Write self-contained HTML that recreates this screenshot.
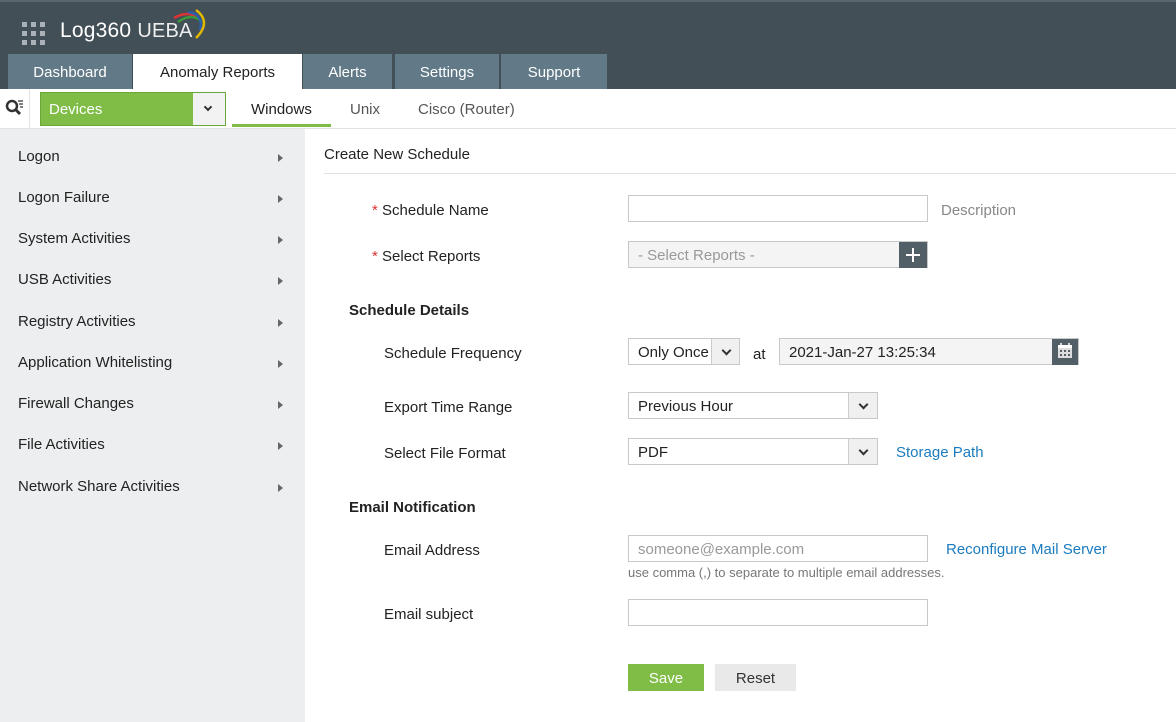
<!DOCTYPE html>
<html><head><style>
*{box-sizing:border-box;margin:0;padding:0}
body{width:1176px;height:722px;position:relative;overflow:hidden;font-family:"Liberation Sans","DejaVu Sans",sans-serif;font-size:14px;color:#222;background:#fff}
.a{position:absolute}
.hdr{left:0;top:0;width:1176px;height:89px;background:#434f57;border-top:2px solid #5b666d}
.tab{top:54px;height:35px;background:#627a88;color:#fff;font-size:15px;text-align:center;line-height:37px}
.side{left:0;top:129px;width:305px;height:593px;background:#eceeef}
.si{left:18px;font-size:15px;color:#222;margin-top:1px}
.arr{left:278px;width:0;height:0;border-left:5px solid #666;border-top:4px solid transparent;border-bottom:4px solid transparent}
.lbl{font-size:15px;color:#222;margin-top:1px}
.box{border:1px solid #c8c8c8;background:#fff;height:27px}
.dd{width:30px;height:100%;position:absolute;right:0;top:0;background:#f0f0f0;border-left:1px solid #ccc}
.dd:after{content:"";position:absolute;left:11px;top:8px;width:5px;height:5px;border-right:2px solid #333;border-bottom:2px solid #333;transform:rotate(45deg)}
.txt{font-size:15px;padding-left:9px;line-height:27px}
.star{color:#d33}
.link{color:#1a7bbf;font-size:15px;margin-top:1px}
</style></head><body>
<div class="a hdr"></div>
<svg class="a" style="left:22px;top:22px" width="24" height="24"><g fill="#aab2b8">
<rect x="0" y="0" width="5" height="5"/><rect x="9" y="0" width="5" height="5"/><rect x="18" y="0" width="5" height="5"/>
<rect x="0" y="9" width="5" height="5"/><rect x="9" y="9" width="5" height="5"/><rect x="18" y="9" width="5" height="5"/>
<rect x="0" y="18" width="5" height="5"/><rect x="9" y="18" width="5" height="5"/><rect x="18" y="18" width="5" height="5"/></g></svg>
<div class="a" style="left:60px;top:19px;font-size:21px;color:#fff;letter-spacing:0.2px">Log360 <span style="font-size:20px;color:#eee">UEBA</span></div>
<svg class="a" style="left:160px;top:8px" width="50" height="35"><path d="M14 10 Q28 2 38 10" stroke="#d33" stroke-width="2.5" fill="none"/><path d="M18 14 Q32 4 42 14" stroke="#3a9a3a" stroke-width="2.5" fill="none"/><path d="M28 4 Q44 6 40 22" stroke="#2a5fb0" stroke-width="2.5" fill="none"/><path d="M36 2 Q52 14 36 30" stroke="#e0b800" stroke-width="2.5" fill="none"/></svg>
<div class="a tab" style="left:8px;width:124px">Dashboard</div>
<div class="a tab" style="left:133px;width:169px;background:#fff;color:#222">Anomaly Reports</div>
<div class="a tab" style="left:303px;width:89px">Alerts</div>
<div class="a tab" style="left:395px;width:104px">Settings</div>
<div class="a tab" style="left:501px;width:106px">Support</div>
<div class="a" style="left:0;top:128px;width:1176px;height:1px;background:#e2e2e2"></div>
<div class="a" style="left:29px;top:89px;width:1px;height:40px;background:#e2e2e2"></div>
<svg class="a" style="left:5px;top:99px" width="20" height="20"><circle cx="7" cy="7" r="5" stroke="#333" stroke-width="2.5" fill="none"/><path d="M10 10 L15 15" stroke="#333" stroke-width="3"/><path d="M13 2h5M14 5h4M15 8h3" stroke="#333" stroke-width="1.2"/></svg>
<div class="a" style="left:40px;top:92px;width:186px;height:34px;background:#7fbd47;border:1px solid #6aa83a"></div>
<div class="a" style="left:49px;top:93px;line-height:34px;color:#fff;font-size:15px">Devices</div>
<div class="a" style="left:193px;top:93px;width:32px;height:32px;background:#f2f2f2"></div>
<div class="a" style="left:205px;top:104px;width:6px;height:6px;border-right:2px solid #333;border-bottom:2px solid #333;transform:rotate(45deg)"></div>
<div class="a" style="left:251px;top:101px;font-size:15px">Windows</div>
<div class="a" style="left:232px;top:124px;width:99px;height:3px;background:#7fbd47"></div>
<div class="a" style="left:350px;top:101px;font-size:15px;color:#555">Unix</div>
<div class="a" style="left:418px;top:101px;font-size:15px;color:#555">Cisco (Router)</div>
<div class="a side"></div>
<div class="a si" style="top:147px">Logon</div><div class="a arr" style="top:154px"></div>
<div class="a si" style="top:188px">Logon Failure</div><div class="a arr" style="top:195px"></div>
<div class="a si" style="top:229px">System Activities</div><div class="a arr" style="top:236px"></div>
<div class="a si" style="top:270px">USB Activities</div><div class="a arr" style="top:277px"></div>
<div class="a si" style="top:312px">Registry Activities</div><div class="a arr" style="top:319px"></div>
<div class="a si" style="top:353px">Application Whitelisting</div><div class="a arr" style="top:360px"></div>
<div class="a si" style="top:394px">Firewall Changes</div><div class="a arr" style="top:401px"></div>
<div class="a si" style="top:435px">File Activities</div><div class="a arr" style="top:442px"></div>
<div class="a si" style="top:477px">Network Share Activities</div><div class="a arr" style="top:484px"></div>
<div class="a" style="left:324px;top:146px;font-size:15px">Create New Schedule</div>
<div class="a" style="left:324px;top:173px;width:852px;height:1px;background:#e2e2e2"></div>
<div class="a lbl" style="left:372px;top:201px"><span class="star">*</span> Schedule Name</div>
<div class="a box" style="left:628px;top:195px;width:300px"></div>
<div class="a" style="left:941px;top:202px;font-size:15px;color:#888">Description</div>
<div class="a lbl" style="left:372px;top:247px"><span class="star">*</span> Select Reports</div>
<div class="a box" style="left:628px;top:241px;width:300px;background:#f4f4f4"><div class="txt" style="color:#999">- Select Reports -</div></div>
<div class="a" style="left:899px;top:242px;width:28px;height:26px;background:#535f66"></div>
<div class="a" style="left:906px;top:254px;width:14px;height:2px;background:#fff"></div><div class="a" style="left:912px;top:248px;width:2px;height:14px;background:#fff"></div>
<div class="a" style="left:349px;top:302px;font-size:15px;font-weight:bold">Schedule Details</div>
<div class="a lbl" style="left:384px;top:344px">Schedule Frequency</div>
<div class="a box" style="left:628px;top:338px;width:112px"><div class="txt">Only Once</div><div class="dd" style="width:28px"></div></div>
<div class="a lbl" style="left:753px;top:345px">at</div>
<div class="a box" style="left:779px;top:338px;width:300px;background:#f4f4f4"><div class="txt">2021-Jan-27 13:25:34</div></div>
<div class="a" style="left:1052px;top:339px;width:26px;height:26px;background:#535f66"></div>
<svg class="a" style="left:1056px;top:341px" width="18" height="20"><rect x="2" y="4" width="14" height="13" fill="#ddd"/><rect x="2" y="4" width="14" height="3" fill="#fff"/><path d="M5 2v4M13 2v4" stroke="#fff" stroke-width="1.5"/><g fill="#535f66"><rect x="4" y="9" width="2" height="2"/><rect x="8" y="9" width="2" height="2"/><rect x="12" y="9" width="2" height="2"/><rect x="4" y="13" width="2" height="2"/><rect x="8" y="13" width="2" height="2"/><rect x="12" y="13" width="2" height="2"/></g></svg>
<div class="a lbl" style="left:384px;top:398px">Export Time Range</div>
<div class="a box" style="left:628px;top:392px;width:250px"><div class="txt">Previous Hour</div><div class="dd" style="width:29px"></div></div>
<div class="a lbl" style="left:384px;top:444px">Select File Format</div>
<div class="a box" style="left:628px;top:438px;width:250px"><div class="txt">PDF</div><div class="dd" style="width:29px"></div></div>
<div class="a link" style="left:896px;top:443px">Storage Path</div>
<div class="a" style="left:349px;top:499px;font-size:15px;font-weight:bold">Email Notification</div>
<div class="a lbl" style="left:384px;top:541px">Email Address</div>
<div class="a box" style="left:628px;top:535px;width:300px"><div class="txt" style="color:#999">someone@example.com</div></div>
<div class="a link" style="left:946px;top:540px">Reconfigure Mail Server</div>
<div class="a" style="left:628px;top:565px;font-size:13px;color:#777">use comma (,) to separate to multiple email addresses.</div>
<div class="a lbl" style="left:384px;top:605px">Email subject</div>
<div class="a box" style="left:628px;top:599px;width:300px"></div>
<div class="a" style="left:628px;top:664px;width:76px;height:27px;background:#7fbd47;color:#fff;font-size:15px;text-align:center;line-height:29px">Save</div>
<div class="a" style="left:715px;top:664px;width:81px;height:27px;background:#e9e9e9;color:#333;font-size:15px;text-align:center;line-height:29px">Reset</div>
</body></html>
